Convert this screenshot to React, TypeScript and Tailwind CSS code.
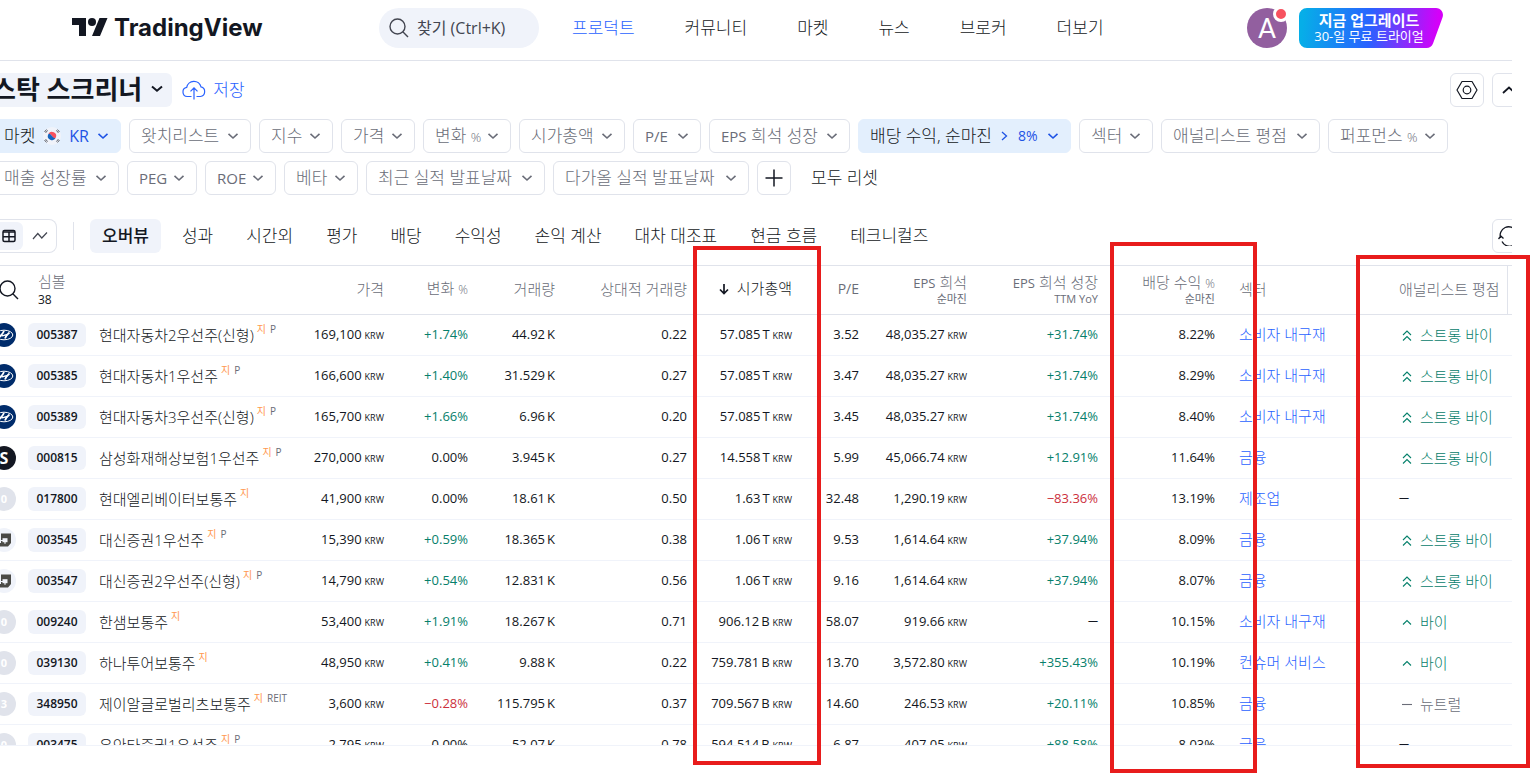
import type { ReactNode } from "react";

const FONT = "font-['Open_Sans','Noto_Sans_CJK_KR',sans-serif]";
const KO = "font-['Open_Sans','Noto_Sans_CJK_KR',sans-serif] font-light";

function Chevron() {
  return (
    <svg width="12" height="8" viewBox="0 0 12 8" fill="none" stroke="currentColor" strokeWidth="1.6" className="shrink-0">
      <path d="M1.500 1.800L6 6l4.500-4.200" />
    </svg>
  );
}

function SearchIcon() {
  return (
    <svg width="20" height="20" viewBox="0 0 20 20" fill="none" stroke="currentColor" strokeWidth="1.400" className="shrink-0">
      <circle cx="8.500" cy="8.500" r="7.500" />
      <path d="M13.800 13.800L19 19" />
    </svg>
  );
}

function Logo() {
  return (
    <a href="#home" className="flex w-[188px] items-center gap-[6px] text-[#131722]">
      <svg width="36" height="28" viewBox="0 0 36 28" fill="currentColor" className="shrink-0">
        <path d="M14 22H7V11H0V4h14v18zM28 22h-8l7.500-18h8L28 22z" />
        <circle cx="20" cy="8" r="4" />
      </svg>
      <span className="font-[Inter,sans-serif] text-2xl leading-7 font-bold">TradingView</span>
    </a>
  );
}

const NAV = ["프로덕트", "커뮤니티", "마켓", "뉴스", "브로커", "더보기"];

function Header() {
  return (
    <header className="flex h-[61px] items-center border-b border-[#e0e3eb] pb-1 pl-[72px]">
      <Logo />
      <button className="ml-[119px] flex h-10 w-40 shrink-0 items-center gap-2 rounded-full bg-[#f0f3fa] pl-[10px] text-base text-[#434651]">
        <SearchIcon />
        <span>찾기 (Ctrl+K)</span>
      </button>
      <nav className={`${KO} ml-[33px] flex shrink-0 gap-[50px] text-[17px] text-[#131722]`}>
        {NAV.map((n, i) => (
          <a key={n} href={"#" + i} className={i === 0 ? "text-[#2962ff]" : ""}>
            {n}
          </a>
        ))}
      </nav>
      <div className="mr-[69px] ml-auto flex items-center gap-3">
        <button aria-label="계정" className="relative flex size-10 items-center justify-center rounded-full bg-[#925f9f] font-[Lato,sans-serif] text-[26px] text-white">
          <span>A</span>
          <span className="absolute -top-0.5 -right-0.5 size-4 rounded-full border-[3px] border-white bg-[#f7525f]" />
        </button>
        <button className="relative flex h-10 w-36 flex-col items-center justify-center pr-1 text-white">
          <svg viewBox="0 0 144 40" className="absolute inset-0 size-full">
            <defs>
              <linearGradient id="up" gradientUnits="userSpaceOnUse" x1="4" y1="10" x2="138" y2="24">
                <stop offset="0" stopColor="#06aee8" />
                <stop offset="0.500" stopColor="#2962ff" />
                <stop offset="1" stopColor="#d500f9" />
              </linearGradient>
            </defs>
            <path d="M8 0h129a7 7 0 0 1 6.500 9.500L134 35.500A7 7 0 0 1 127.500 40H8a8 8 0 0 1-8-8V8a8 8 0 0 1 8-8z" fill="url(#up)" />
          </svg>
          <span className="relative text-[15px] leading-4 font-bold">지금 업그레이드</span>
          <span className="relative text-[13px] leading-4">30-일 무료 트라이얼</span>
        </button>
      </div>
    </header>
  );
}

function Chip({ w, children, active = false, latin = false }: { w: string; children: ReactNode; active?: boolean; latin?: boolean }) {
  return (
    <button
      className={`${w} flex h-[34px] shrink-0 items-center justify-between rounded-md border px-[11px] whitespace-nowrap ${
        latin ? "text-[15px] leading-4" : `${KO} text-[17px]`
      } ${active ? "border-[#e3effd] bg-[#e3effd] text-[#1e53e5]" : "border-[#e0e3eb] text-[#6a6d78]"}`}
    >
      {children}
      <Chevron />
    </button>
  );
}

function Flag() {
  return (
    <svg width="18" height="18" viewBox="0 0 18 18">
      <circle cx="9" cy="9" r="9" fill="#f0f3fa" />
      <path d="M5.300 7.200a4.100 4.100 0 0 1 7.400 3.600C11.500 12 10 11 9 9.200S6.200 6.500 5.300 7.200z" fill="#f7525f" />
      <path d="M12.700 10.800a4.100 4.100 0 0 1-7.400-3.600C6.500 6 8 7.500 9 9s2.800 2.600 3.700 1.800z" fill="#1565c0" />
      <path
        d="M1.500 5l2-2.500M2.600 5.900l2-2.500M14.500 2.500l2 2.500M13.400 3.400l2 2.500M1.500 13l2 2.500M2.600 12.100l2 2.500M16.500 13l-2 2.500M15.400 12.100l-2 2.500"
        stroke="#50535e"
        strokeWidth="0.900"
      />
    </svg>
  );
}

function Filters() {
  return (
    <div className="-ml-2 flex flex-col gap-2">
      <div className="flex gap-2">
        <Chip w="w-[129px]" active>
          <span className="text-[#131722]">마켓</span>
          <Flag />
          <span className="text-base font-normal">KR</span>
        </Chip>
        <Chip w="w-[122px]">왓치리스트</Chip>
        <Chip w="w-[74px]">지수</Chip>
        <Chip w="w-[74px]">가격</Chip>
        <Chip w="w-[88px]">
          <span>
            변화 <span className="text-[13px]">%</span>
          </span>
        </Chip>
        <Chip w="w-[106px]">시가총액</Chip>
        <Chip w="w-[68px]" latin>P/E</Chip>
        <Chip w="w-[141px]">
          <span>
            <span className="text-[15px] font-normal">EPS</span> 희석 성장
          </span>
        </Chip>
        <Chip w="w-[213px]" active>
          <span className="text-[#131722]">배당 수익, 순마진</span>
          <svg width="7" height="10" viewBox="0 0 7 10" fill="none" stroke="currentColor" strokeWidth="1.300">
            <path d="M1 1l4.500 4L1 9" />
          </svg>
          <span className="text-sm font-normal">8%</span>
        </Chip>
        <Chip w="w-[74px]">섹터</Chip>
        <Chip w="w-[159px]">애널리스트 평점</Chip>
        <Chip w="w-[120px]">
          <span>
            퍼포먼스 <span className="text-[13px]">%</span>
          </span>
        </Chip>
      </div>
      <div className="flex gap-2">
        <Chip w="w-[127px]">매출 성장률</Chip>
        <Chip w="w-[70px]" latin>PEG</Chip>
        <Chip w="w-[71px]" latin>ROE</Chip>
        <Chip w="w-[74px]">베타</Chip>
        <Chip w="w-[179px]">최근 실적 발표날짜</Chip>
        <Chip w="w-[196px]">다가올 실적 발표날짜</Chip>
        <button aria-label="필터 추가" className="flex size-[34px] items-center justify-center rounded-md border border-[#e0e3eb] text-[#131722]">
          <svg width="18" height="18" viewBox="0 0 18 18" fill="none" stroke="currentColor" strokeWidth="1.500">
            <path d="M9 .5v17M.5 9h17" />
          </svg>
        </button>
        <button className={`${KO} ml-3 text-[17px] text-[#131722]`}>모두 리셋</button>
      </div>
    </div>
  );
}

function TitleRow() {
  return (
    <div className="flex items-center">
      <button className="-ml-4 flex h-[34px] items-center gap-2 rounded-md bg-[#f0f3fa] px-2 pb-0.5 text-[#131722]">
        <h1 className="text-[26px] leading-8 font-bold whitespace-nowrap">스탁 스크리너</h1>
        <svg width="14" height="8" viewBox="0 0 14 8" fill="none" stroke="currentColor" strokeWidth="2">
          <path d="M2 1.500l5 4.300 5-4.300" />
        </svg>
      </button>
      <button className={`${KO} ml-[10px] flex items-center gap-[7px] text-[17px] text-[#2962ff]`}>
        <svg width="24" height="20" viewBox="0 0 24 20" fill="none" stroke="currentColor" strokeWidth="1.200">
          <path d="M9.500 16.500H5.200A4.600 4.600 0 0 1 4.700 7.400 7.300 7.300 0 0 1 19 6.900a4.900 4.900 0 0 1-.6 9.600h-3.900M12 19.500V8M8.500 11.300L12 7.800l3.500 3.500" />
        </svg>
        <span>저장</span>
      </button>
      <div className="-mr-[14px] ml-auto flex gap-2 text-[#131722]">
        <button aria-label="설정" className="flex size-[34px] items-center justify-center rounded-md border border-[#e0e3eb]">
          <svg width="22" height="20" viewBox="0 0 22 20" fill="none" stroke="currentColor" strokeWidth="1.200">
            <path d="M6 1.500h10l5 8.500-5 8.500H6L1 10z" strokeLinejoin="round" />
            <circle cx="11" cy="10" r="3.800" />
          </svg>
        </button>
        <button aria-label="접기" className="flex size-[34px] items-center justify-center rounded-md border border-[#e0e3eb]">
          <svg width="14" height="8" viewBox="0 0 14 8" fill="none" stroke="currentColor" strokeWidth="1.800">
            <path d="M1 7l6-5.500L13 7" />
          </svg>
        </button>
      </div>
    </div>
  );
}

const TABS = ["오버뷰", "성과", "시간외", "평가", "배당", "수익성", "손익 계산", "대차 대조표", "현금 흐름", "테크니컬즈"];

function TabRow() {
  return (
    <div className="flex items-center">
      <div className="-ml-2 flex h-[34px] w-[65px] shrink-0 items-center rounded-lg border border-l-0 border-[#e0e3eb]">
        <button aria-label="표 보기" className="flex h-7 w-[31px] items-center justify-end rounded-md bg-[#f0f3fa] pr-[7px]">
          <svg width="14" height="14" viewBox="0 0 14 14" fill="none" stroke="#131722" strokeWidth="1.500">
            <rect x="1" y="1.500" width="12" height="11" rx="1.500" />
            <path d="M1 3h12M7 3v9.500M1 7.700h12" />
          </svg>
        </button>
        <button aria-label="차트 보기" className="flex flex-1 items-center justify-center">
          <svg width="16" height="10" viewBox="0 0 16 10" fill="none" stroke="#434651" strokeWidth="1.200">
            <path d="M1 8l4.800-5.500 4 4.500L15 1.500" />
          </svg>
        </button>
      </div>
      <div className="mr-4 ml-4 h-7 w-px bg-[#e0e3eb]" />
      <div role="tablist" className="flex gap-[9px]">
        {TABS.map((t, i) => (
          <button
            key={t}
            role="tab"
            aria-selected={i === 0}
            className={`h-[34px] rounded-md px-3 text-[17px] whitespace-nowrap text-[#131722] ${i === 0 ? "bg-[#f0f3fa] font-medium" : "font-light"}`}
          >
            {t}
          </button>
        ))}
      </div>
      <button aria-label="새로고침" className="-mr-[14px] ml-auto flex size-[34px] items-center justify-center rounded-md border border-[#e0e3eb] text-[#131722]">
        <svg width="22" height="20" viewBox="0 0 22 20" fill="none" stroke="currentColor" strokeWidth="1.300">
          <path d="M2.600 12A8.500 8.500 0 0 1 18 5M19.400 8A8.500 8.500 0 0 1 4 15.500M.5 13l2.300-3 2.700 2.500" />
        </svg>
      </button>
    </div>
  );
}

type Rating = "strong" | "buy" | "neutral" | "";
type LogoKind = "hyundai" | "samsung" | "daishin" | "0" | "3";
interface Stock {
  logo: LogoKind;
  code: string;
  name: string;
  tag: string;
  price: string;
  change: string;
  vol: string;
  rel: string;
  cap: string;
  unit: string;
  pe: string;
  eps: string;
  growth: string;
  div: string;
  sector: string;
  rating: Rating;
}

const row = (
  logo: LogoKind, code: string, name: string, tag: string, price: string, change: string, vol: string, rel: string,
  cap: string, unit: string, pe: string, eps: string, growth: string, div: string, sector: string, rating: Rating,
): Stock => ({ logo, code, name, tag, price, change, vol, rel, cap, unit, pe, eps, growth, div, sector, rating });

const STOCKS: Stock[] = [
  row("hyundai", "005387", "현대자동차2우선주(신형)", "P", "169,100", "+1.74%", "44.92", "0.22", "57.085", "T", "3.52", "48,035.27", "+31.74%", "8.22%", "소비자 내구재", "strong"),
  row("hyundai", "005385", "현대자동차1우선주", "P", "166,600", "+1.40%", "31.529", "0.27", "57.085", "T", "3.47", "48,035.27", "+31.74%", "8.29%", "소비자 내구재", "strong"),
  row("hyundai", "005389", "현대자동차3우선주(신형)", "P", "165,700", "+1.66%", "6.96", "0.20", "57.085", "T", "3.45", "48,035.27", "+31.74%", "8.40%", "소비자 내구재", "strong"),
  row("samsung", "000815", "삼성화재해상보험1우선주", "P", "270,000", "0.00%", "3.945", "0.27", "14.558", "T", "5.99", "45,066.74", "+12.91%", "11.64%", "금융", "strong"),
  row("0", "017800", "현대엘리베이터보통주", "", "41,900", "0.00%", "18.61", "0.50", "1.63", "T", "32.48", "1,290.19", "−83.36%", "13.19%", "제조업", ""),
  row("daishin", "003545", "대신증권1우선주", "P", "15,390", "+0.59%", "18.365", "0.38", "1.06", "T", "9.53", "1,614.64", "+37.94%", "8.09%", "금융", "strong"),
  row("daishin", "003547", "대신증권2우선주(신형)", "P", "14,790", "+0.54%", "12.831", "0.56", "1.06", "T", "9.16", "1,614.64", "+37.94%", "8.07%", "금융", "strong"),
  row("0", "009240", "한샘보통주", "", "53,400", "+1.91%", "18.267", "0.71", "906.12", "B", "58.07", "919.66", "—", "10.15%", "소비자 내구재", "buy"),
  row("0", "039130", "하나투어보통주", "", "48,950", "+0.41%", "9.88", "0.22", "759.781", "B", "13.70", "3,572.80", "+355.43%", "10.19%", "컨슈머 서비스", "buy"),
  row("3", "348950", "제이알글로벌리츠보통주", "REIT", "3,600", "−0.28%", "115.795", "0.37", "709.567", "B", "14.60", "246.53", "+20.11%", "10.85%", "금융", "neutral"),
  row("0", "003475", "유안타증권1우선주", "P", "2,795", "0.00%", "52.07", "0.78", "594.514", "B", "6.87", "407.05", "+88.58%", "8.03%", "금융", ""),
];

function StockLogo({ kind }: { kind: LogoKind }) {
  if (kind === "hyundai")
    return (
      <svg width="24" height="24" viewBox="0 0 24 24" className="shrink-0">
        <circle cx="12" cy="12" r="12" fill="#002c6b" />
        <ellipse cx="12" cy="12" rx="8.800" ry="4.800" fill="none" stroke="#fff" strokeWidth="1" />
        <path d="M12 8c-1 2.500-2 3.500-4.500 6M17.500 9.500c-2 1.500-3.500 3.500-4.500 6" fill="none" stroke="#fff" strokeWidth="1.900" />
        <path d="M9.500 12.800c2.500.2 4-1.400 6.500-1.400" fill="none" stroke="#fff" strokeWidth="1.500" />
      </svg>
    );
  if (kind === "daishin")
    return (
      <svg width="24" height="24" viewBox="0 0 24 24" className="shrink-0">
        <circle cx="12" cy="12" r="12" fill="#f0f3fa" />
        <path d="M9 5.500h10v9.500l-3 3.500H5.500V15H9z" fill="#4a4a46" />
        <path d="M10.500 10.200h5v4h-5z" fill="#f0f3fa" />
        <path d="M8 12.500h5v3.200" fill="none" stroke="#f0f3fa" strokeWidth="1.200" />
      </svg>
    );
  const dark = kind === "samsung";
  return (
    <span
      className={`flex size-6 shrink-0 items-center justify-center rounded-full font-bold text-white ${
        dark ? "bg-[#131722] text-base" : "bg-[#e0e3eb] text-[11px]"
      }`}
    >
      {dark ? "S" : kind}
    </span>
  );
}

function Dash() {
  return <span className="block pb-1 text-[10px] leading-3 font-medium text-[#131722]">—</span>;
}

function RatingCell({ rating }: { rating: Rating }) {
  if (!rating) return <Dash />;
  const label = { strong: "스트롱 바이", buy: "바이", neutral: "뉴트럴" }[rating];
  const d = { strong: "M1 6l4-4 4 4M1 11.500l4-4 4 4", buy: "M1 8.500l4-4 4 4", neutral: "M0 6.500h10" }[rating];
  return (
    <span className={`flex items-center gap-2 pl-[3px] ${rating === "neutral" ? "text-[#6a6d78]" : "text-[#06806b]"}`}>
      <svg width="10" height="13" viewBox="0 0 10 13" fill="none" stroke="currentColor" strokeWidth="1.100">
        <path d={d} />
      </svg>
      <span className="font-light">{label}</span>
    </span>
  );
}

const tone = (v: string) => (v.startsWith("+") ? "text-[#06806b]" : v.startsWith("−") ? "text-[#cc2f3c]" : "text-[#131722]");

function Krw() {
  return <span className="ml-[3px] text-[9px]">KRW</span>;
}

function Th({ children, sub, left = false, active = false, end = false }: { children: ReactNode; sub?: string; left?: boolean; active?: boolean; end?: boolean }) {
  return (
    <th
      className={`h-[50px] border-y border-[#e0e3eb] pt-0 pb-0.5 font-light whitespace-nowrap ${end ? "border-r pr-2" : "pr-3"} ${
        left ? "pl-3 text-left" : "text-right"
      } ${active ? "text-[#131722]" : "text-[#6a6d78]"}`}
    >
      <div className="leading-[17px]">{children}</div>
      {sub && <div className="text-[11px] leading-[13px] font-normal">{sub}</div>}
    </th>
  );
}

function Num({ children, color = "text-[#131722]" }: { children: ReactNode; color?: string }) {
  return <td className={`border-b border-[#f0f3fa] py-0 pr-3 text-right text-[13px] whitespace-nowrap ${color}`}>{children}</td>;
}

function StockTable() {
  return (
    <table className="w-full table-fixed border-separate border-spacing-0 text-[15px]">
      <colgroup>
        <col className="w-[300px]" />
        <col className="w-[96px]" />
        <col className="w-[84px]" />
        <col className="w-[87px]" />
        <col className="w-[132px]" />
        <col className="w-[105px]" />
        <col className="w-[67px]" />
        <col className="w-[108px]" />
        <col className="w-[131px]" />
        <col className="w-[117px]" />
        <col className="w-[160px]" />
        <col className="w-[121px]" />
        <col />
      </colgroup>
      <thead>
        <tr>
          <th className="h-[50px] border-y border-[#e0e3eb] p-0 text-left font-normal">
            <div className="flex items-center gap-[19px]">
              <button aria-label="심볼 검색" className="-ml-px text-[#131722]">
                <SearchIcon />
              </button>
              <div>
                <div className="leading-5 font-light text-[#6a6d78]">심볼</div>
                <div className="text-xs leading-[18px] text-[#131722]">38</div>
              </div>
            </div>
          </th>
          <Th>가격</Th>
          <Th>변화 <span className="text-xs">%</span></Th>
          <Th>거래량</Th>
          <Th>상대적 거래량</Th>
          <Th active>
            <span className="inline-flex items-center gap-2">
              <svg width="10" height="12" viewBox="0 0 10 12" fill="none" stroke="currentColor" strokeWidth="1.700">
                <path d="M5 1v9M1 6.500l4 4 4-4" />
              </svg>
              시가총액
            </span>
          </Th>
          <Th><span className="text-sm font-normal">P/E</span></Th>
          <Th sub="순마진"><span className="text-[13px] font-normal">EPS</span> 희석</Th>
          <Th sub="TTM YoY"><span className="text-[13px] font-normal">EPS</span> 희석 성장</Th>
          <Th sub="순마진">배당 수익 <span className="text-xs">%</span></Th>
          <Th left>섹터</Th>
          <Th left end>애널리스트 평점</Th>
          <th className="border-y border-[#e0e3eb] p-0" />
        </tr>
      </thead>
      <tbody>
        {STOCKS.map((s) => (
          <tr key={s.code} className="h-[41px]">
            <td className="border-b border-[#f0f3fa] p-0">
              <div className="-ml-2 flex items-center whitespace-nowrap">
                <StockLogo kind={s.logo} />
                <a href={"#" + s.code} className="mr-[13px] ml-3 flex h-6 w-[58px] shrink-0 items-center justify-center rounded-md bg-[#f0f3fa] text-xs font-semibold text-[#131722]">
                  {s.code}
                </a>
                <span className="font-light text-[#131722]">{s.name}</span>
                <span className="flex gap-1 self-start pl-[3px] text-[10px] leading-3">
                  <span className="text-[#ff9850]">지</span>
                  <span className="text-[#6a6d78]">{s.tag}</span>
                </span>
              </div>
            </td>
            <Num>{s.price}<Krw /></Num>
            <Num color={tone(s.change)}>{s.change}</Num>
            <Num>{s.vol}<span className="ml-0.5">K</span></Num>
            <Num>{s.rel}</Num>
            <Num>{s.cap}<span className="ml-0.5">{s.unit}</span><Krw /></Num>
            <Num>{s.pe}</Num>
            <Num>{s.eps}<Krw /></Num>
            <Num color={tone(s.growth)}>{s.growth === "—" ? <Dash /> : s.growth}</Num>
            <Num>{s.div}</Num>
            <td className="border-b border-[#f0f3fa] pt-0 pr-0 pb-0.5 pl-3 font-light whitespace-nowrap">
              <a href={"#" + s.sector} className="text-[#2962ff]">{s.sector}</a>
            </td>
            <td className="border-b border-[#f0f3fa] py-0 pl-3 whitespace-nowrap">
              <RatingCell rating={s.rating} />
            </td>
            <td className="border-b border-[#f0f3fa] p-0" />
          </tr>
        ))}
      </tbody>
    </table>
  );
}

export default function App() {
  return (
    <div className={`${FONT} relative h-screen overflow-hidden bg-white`}>
      <div className="mr-[19px] h-[calc(100vh-28px)] overflow-hidden border-b border-[#f0f3fa]">
        <Header />
        <main>
          <div className="flex flex-col pt-3">
            <TitleRow />
            <div className="pt-3 pb-6">
              <Filters />
            </div>
            <TabRow />
          </div>
          <div className="pt-3">
            <StockTable />
          </div>
        </main>
      </div>
      <div className="pointer-events-none absolute top-[246px] left-[693px] h-[519px] w-[128px] border-4 border-[#e81c1c]" />
      <div className="pointer-events-none absolute top-[242px] left-[1110px] h-[531px] w-[147px] border-4 border-[#e81c1c]" />
      <div className="pointer-events-none absolute top-[255px] left-[1356px] h-[513px] w-[174px] border-4 border-[#e81c1c]" />
    </div>
  );
}
